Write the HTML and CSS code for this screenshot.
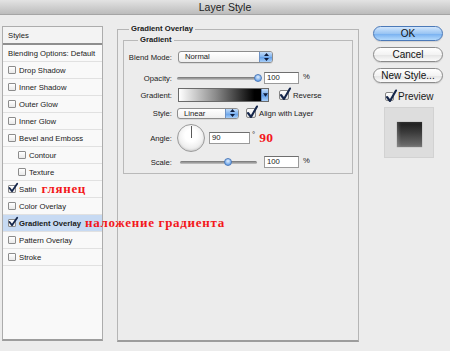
FILE: index.html
```html
<!DOCTYPE html>
<html>
<head>
<meta charset="utf-8">
<title>Layer Style</title>
<link rel="stylesheet" href="styles.css">
</head>
<body>
<div class="window">
  <div class="titlebar">Layer Style</div>
  <div class="content">
    <div class="styles-list">
      <div class="row head">Styles</div>
      <div class="row blending">Blending Options: Default</div>
      <div class="row"><span class="cb"></span>Drop Shadow</div>
      <div class="row"><span class="cb"></span>Inner Shadow</div>
      <div class="row"><span class="cb"></span>Outer Glow</div>
      <div class="row"><span class="cb"></span>Inner Glow</div>
      <div class="row"><span class="cb"></span>Bevel and Emboss</div>
      <div class="row sub"><span class="cb"></span>Contour</div>
      <div class="row sub"><span class="cb"></span>Texture</div>
      <div class="row"><span class="cb"><svg class="chk" viewBox="0 0 10 10" width="10" height="10"><path d="M1.5 5 L4 8.2 L9.2 0.8" /></svg></span>Satin<span class="note">глянец</span></div>
      <div class="row"><span class="cb"></span>Color Overlay</div>
      <div class="row selected"><span class="cb"><svg class="chk" viewBox="0 0 10 10" width="10" height="10"><path d="M1.5 5 L4 8.2 L9.2 0.8" /></svg></span>Gradient Overlay<span class="note wide">наложение градиента</span></div>
      <div class="row"><span class="cb"></span>Pattern Overlay</div>
      <div class="row"><span class="cb"></span>Stroke</div>
    </div>

    <fieldset class="panel">
      <legend>Gradient Overlay</legend>
      <fieldset class="group">
        <legend>Gradient</legend>

        <div class="field f-blend">
          <span class="lbl">Blend Mode:</span>
          <div class="select blend">
            <span class="val">Normal</span>
            <span class="step"><svg viewBox="0 0 7 10" width="7" height="10"><path d="M3.5 1 L6 4 L1 4 Z M1 6 L6 6 L3.5 9 Z"/></svg></span>
          </div>
        </div>

        <div class="field f-opacity">
          <span class="lbl">Opacity:</span>
          <div class="slider s-opacity"><div class="track"></div><span class="thumb" style="left: 97%"></span></div>
          <span class="input">100</span>
          <span class="pct">%</span>
        </div>

        <div class="field f-gradient">
          <span class="lbl">Gradient:</span>
          <div class="swatch"><span class="fill"></span><span class="drop"><svg viewBox="0 0 6 4" width="5" height="4"><path d="M0 0 L6 0 L3 4 Z"/></svg></span></div>
          <span class="bcb rev"><svg class="bchk" viewBox="0 0 12 14" width="12" height="14"><path d="M2 8 L5 12 L11 1.5"/></svg></span>
          <span class="cbtext">Reverse</span>
        </div>

        <div class="field f-style">
          <span class="lbl">Style:</span>
          <div class="select style">
            <span class="val">Linear</span>
            <span class="step"><svg viewBox="0 0 7 10" width="7" height="10"><path d="M3.5 1 L6 4 L1 4 Z M1 6 L6 6 L3.5 9 Z"/></svg></span>
          </div>
          <span class="bcb align"><svg class="bchk" viewBox="0 0 12 14" width="12" height="14"><path d="M2 8 L5 12 L11 1.5"/></svg></span>
          <span class="cbtext al">Align with Layer</span>
        </div>

        <div class="field f-angle">
          <span class="lbl">Angle:</span>
          <div class="dial"><span class="needle"></span></div>
          <span class="input ang">90</span>
          <span class="deg">°</span>
          <span class="red90">90</span>
        </div>

        <div class="field f-scale">
          <span class="lbl">Scale:</span>
          <div class="slider s-scale"><div class="track"></div><span class="thumb" style="left: 62%"></span></div>
          <span class="input sc">100</span>
          <span class="pct">%</span>
        </div>
      </fieldset>
    </fieldset>

    <div class="actions">
      <div class="btn ok">OK</div>
      <div class="btn">Cancel</div>
      <div class="btn">New Style...</div>
      <div class="preview-row"><span class="bcb pv"><svg class="bchk" viewBox="0 0 12 14" width="12" height="14"><path d="M2 8 L5 12 L11 1.5"/></svg></span><span class="pvtext">Preview</span></div>
      <div class="preview-box"><span class="sample"></span></div>
    </div>
  </div>
</div>
</body>
</html>
```

FILE: styles.css
```css
* { box-sizing: border-box; }
html, body { margin: 0; padding: 0; }
body {
  width: 450px;
  height: 351px;
  overflow: hidden;
  background: #ececec;
  font-family: "Liberation Sans", Arial, sans-serif;
  font-size: 7.7px;
  color: #1a1a1a;
}

.titlebar {
  height: 15px;
  border-bottom: 1px solid #a5a5a5;
  background: linear-gradient(#e3e3e3, #bcbcbc);
  text-align: center;
  font-size: 10.5px;
  line-height: 14px;
  color: #222;
}

.content {
  display: flex;
  align-items: flex-start;
  padding-left: 2px;
}

/* ---------- styles list ---------- */
.styles-list {
  flex: none;
  width: 101px;
  height: 315px;
  margin-top: 11px;
  margin-right: 14px;
  border: 1px solid #acacac;
  border-bottom: 2px solid #9d9d9d;
  background: #f9f9f9;
}
.row {
  display: flex;
  align-items: center;
  height: 17px;
  padding-left: 5px;
  border-bottom: 1px solid #e1e1e1;
  white-space: nowrap;
}
.row.head {
  height: 18px;
  background: #f3f3f3;
  border-bottom: 2px solid #8e8e8e;
}
.row.sub { padding-left: 15px; }
.row.selected {
  background: #c7daf3;
  font-weight: bold;
}
.cb {
  position: relative;
  flex: none;
  width: 8px;
  height: 8px;
  margin-right: 3px;
  border: 1px solid #8c8c8c;
  border-radius: 1px;
  background: linear-gradient(#ffffff, #e9e9e9);
}
.chk {
  position: absolute;
  left: -1px;
  top: -3px;
  overflow: visible;
}
.chk path, .bchk path {
  fill: none;
  stroke: #14254a;
  stroke-width: 1.8;
  stroke-linecap: round;
  stroke-linejoin: round;
}
.note {
  position: relative;
  margin-left: 5px;
  color: #f3171b;
  font-family: "Liberation Serif", "DejaVu Serif", serif;
  font-weight: bold;
  font-size: 13px;
  letter-spacing: 0.7px;
}
.note.wide { margin-left: 4px; }

/* ---------- main panel ---------- */
.panel {
  flex: none;
  width: 242px;
  height: 318px;
  margin: 9px 14px 0 0;
  padding: 0 5px;
  min-width: 0;
  border: 1px solid #b5b5b5;
  border-bottom: 2px solid #9c9c9c;
}
.panel > legend {
  margin-left: 6px;
  padding: 0 2px;
  font-weight: bold;
  line-height: 10px;
}
.group {
  margin: 1px 0 0;
  padding: 5px 0 5px 0;
  min-width: 0;
  border: 1px solid #b9b9b9;
}
.group > legend {
  margin-left: 14px;
  padding: 0 2px;
  font-weight: bold;
  line-height: 10px;
}

.field {
  display: flex;
  align-items: center;
  height: 14px;
}
.f-opacity { margin-top: 7px; }
.f-gradient { margin-top: 3px; }
.f-style { margin-top: 5px; height: 12px; }
.f-angle { margin-top: 4px; height: 30px; }
.f-scale { margin-top: 3px; height: 12px; }

.lbl {
  flex: none;
  width: 48px;
  margin-right: 5px;
  text-align: right;
  white-space: nowrap;
}

.select {
  display: flex;
  flex: none;
  height: 12px;
  border: 1px solid #8d8d8d;
  border-radius: 3px;
  background: linear-gradient(#ffffff, #efefef);
  box-shadow: 0 1px 0 rgba(0,0,0,0.08);
  overflow: hidden;
}
.select.blend { width: 95px; margin-left: 1px; }
.select.style { width: 62px; height: 11px; }
.select .val {
  flex: 1;
  padding-left: 6px;
  line-height: 10px;
}
.select .step {
  display: flex;
  align-items: center;
  justify-content: center;
  width: 13px;
  border-left: 1px solid #6c92c6;
  background: linear-gradient(#c3dcf8, #7fb2ee 50%, #5f9de8 51%, #a9cff8);
}
.step path { fill: #0e1c3c; }

.slider {
  position: relative;
  flex: none;
  height: 10px;
}
.s-opacity { width: 83px; }
.s-scale { width: 77px; margin-left: 3px; }
.slider .track {
  margin-top: 4px;
  height: 3px;
  border-radius: 2px;
  background: linear-gradient(#727272, #c6c6c6);
}
.slider .thumb {
  position: absolute;
  top: 1px;
  width: 8px;
  height: 8px;
  margin-left: -4px;
  border: 1px solid #4d7bbb;
  border-radius: 50%;
  background: radial-gradient(circle at 50% 35%, #e2effd, #6aa3e9 75%);
}

.input {
  flex: none;
  width: 35px;
  height: 12px;
  margin-left: 4px;
  padding-left: 2px;
  border: 1px solid #9a9a9a;
  border-top-color: #6f6f6f;
  background: #fff;
  line-height: 10px;
}
.input.sc { margin-left: 7px; }
.input.ang { width: 41px; margin-left: 4px; }
.pct { margin-left: 4px; margin-top: -3px; }

.swatch {
  display: flex;
  flex: none;
  width: 91px;
  height: 14px;
  margin-left: 1px;
  border: 1px solid #6a6a6a;
  background: #fff;
}
.swatch .fill {
  flex: 1;
  background: linear-gradient(to right, #ffffff 0%, #8a8a8a 45%, #000000 92%);
}
.swatch .drop {
  display: flex;
  align-items: center;
  justify-content: center;
  width: 7px;
  border-left: 1px solid #5e84bd;
  background: linear-gradient(#c3dcf8, #6ea6ec 50%, #5b99e7 51%, #a9cff8);
}
.drop path { fill: #0e1c3c; }

.bcb {
  position: relative;
  flex: none;
  width: 10px;
  height: 10px;
  border: 1px solid #868686;
  border-radius: 2px;
  background: linear-gradient(#ffffff, #e6e6e6);
}
.bcb.rev { margin-left: 10px; }
.bcb.align { margin-left: 7px; }
.bchk {
  position: absolute;
  left: -1px;
  top: -4px;
  overflow: visible;
}
.bchk path { stroke-width: 2.1; }
.cbtext { margin-left: 4px; white-space: nowrap; }
.cbtext.al { margin-left: 3px; }

.dial {
  position: relative;
  flex: none;
  width: 28px;
  height: 28px;
  border: 1px solid #9b9b9b;
  border-radius: 50%;
  background: radial-gradient(circle at 50% 40%, #ffffff 30%, #dcdcdc 100%);
  box-shadow: inset 0 -1px 2px rgba(0,0,0,0.12);
}
.needle {
  position: absolute;
  left: 13px;
  top: 1px;
  width: 1px;
  height: 12px;
  background: #5a5a5a;
}
.deg {
  margin-left: 2px;
  margin-top: -7px;
  font-size: 8px;
}
.red90 {
  margin-left: 4px;
  color: #f3171b;
  font-family: "Liberation Serif", "DejaVu Serif", serif;
  font-weight: bold;
  font-size: 13.5px;
  letter-spacing: 0.3px;
}

/* ---------- actions ---------- */
.actions {
  flex: none;
  width: 70px;
  margin-top: 11px;
  display: flex;
  flex-direction: column;
}
.btn {
  height: 15px;
  margin-bottom: 6px;
  border: 1px solid #8b8b8b;
  border-radius: 8px;
  background: linear-gradient(#ffffff, #f3f3f3 50%, #e3e3e3 51%, #fbfbfb);
  box-shadow: 0 1px 1px rgba(0,0,0,0.12);
  text-align: center;
  font-size: 10px;
  line-height: 13px;
  color: #111;
}
.btn.ok {
  border-color: #4b79b8;
  background: linear-gradient(#d2e6fc, #9ac5f3 50%, #74aef0 51%, #b4dafc);
}
.preview-row {
  display: flex;
  align-items: center;
  height: 14px;
  padding-left: 12px;
}
.bcb.pv { width: 9px; height: 9px; }
.pvtext {
  margin-left: 4px;
  font-size: 10px;
}
.preview-box {
  display: flex;
  justify-content: center;
  width: 50px;
  height: 51px;
  margin: 4px 0 0 11px;
  padding-top: 14px;
  border: 1px solid #d2d2d2;
  background: #dddddd;
}
.sample {
  width: 25px;
  height: 25px;
  background: linear-gradient(#1c1c1c, #3a3a3a 40%, #707070);
  box-shadow: inset 2px 0 3px rgba(255,255,255,0.18), 0 0 1px rgba(0,0,0,0.4);
}
```
